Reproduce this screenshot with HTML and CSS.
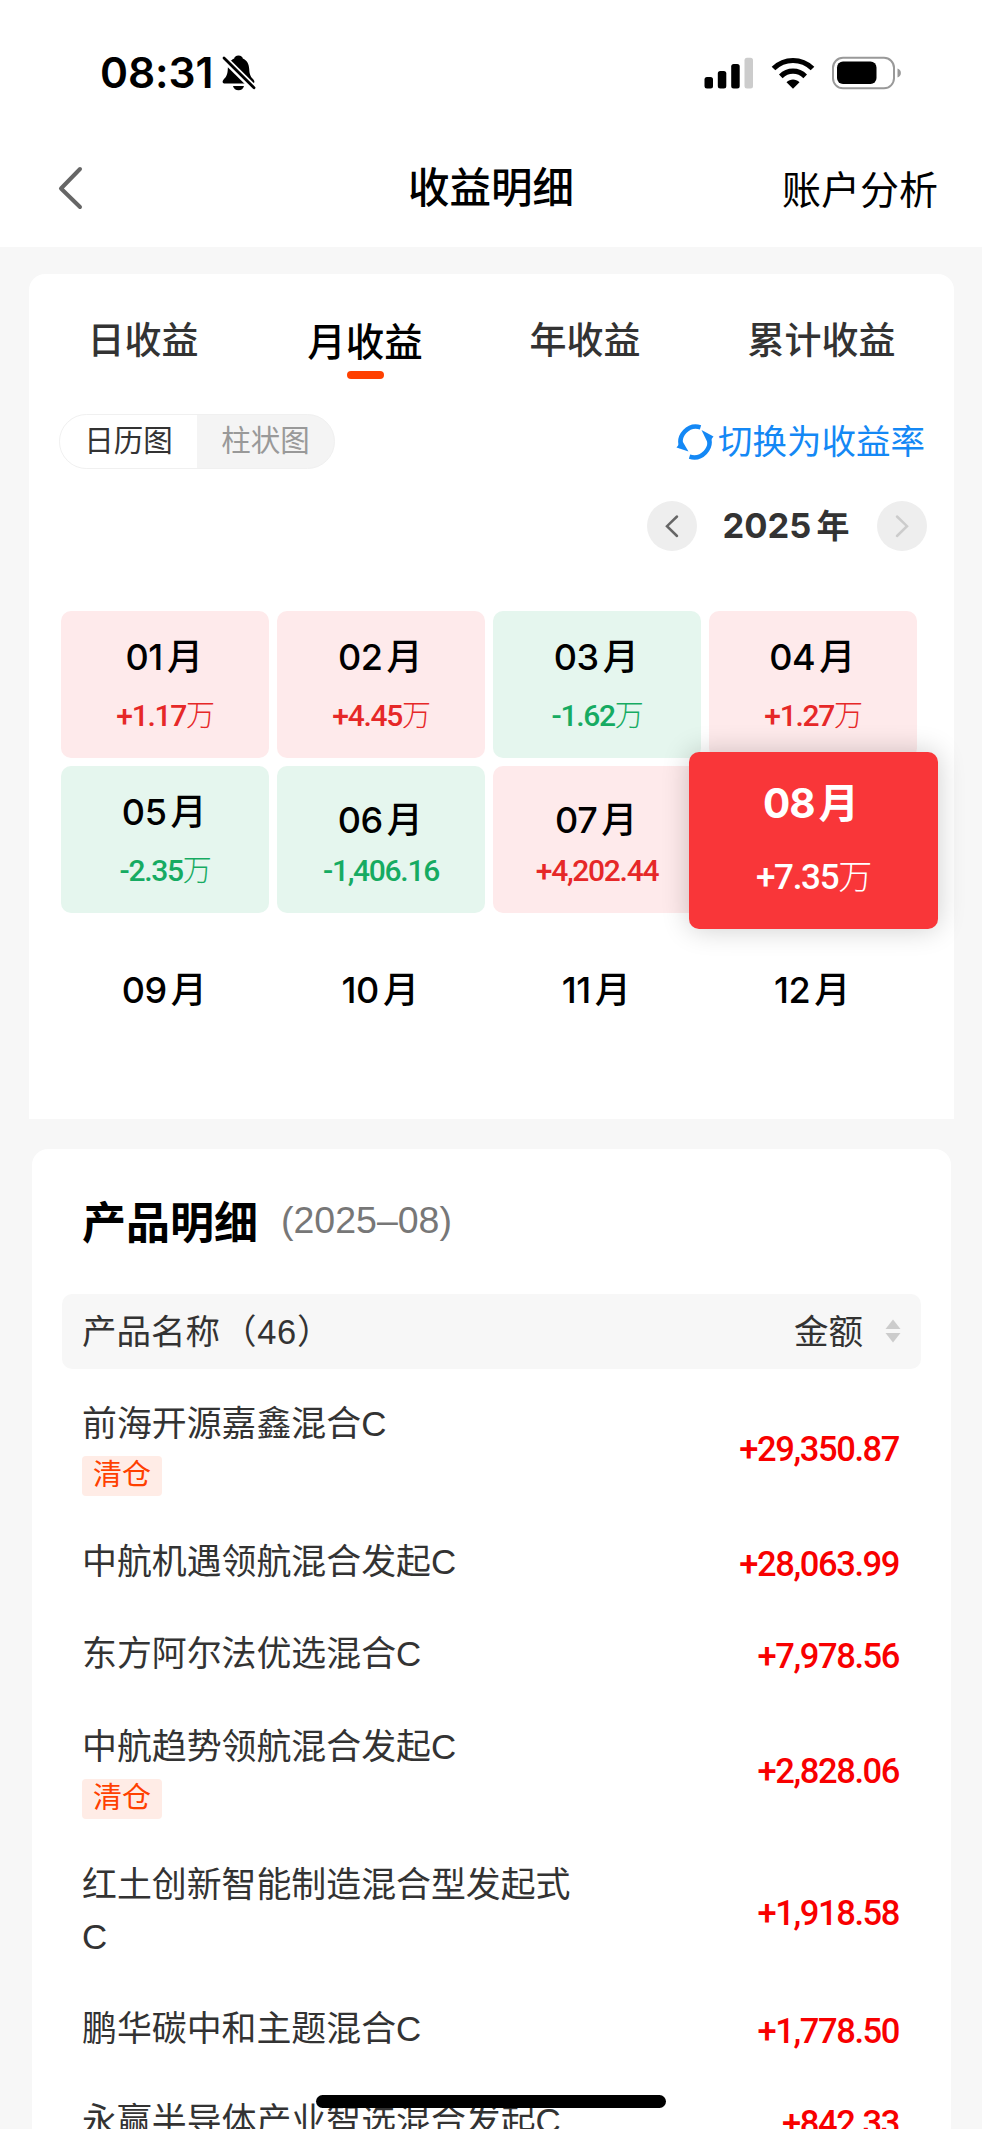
FILE: index.html
```html
<!DOCTYPE html>
<html lang="zh-CN">
<head>
  <meta charset="UTF-8">
  <title>收益明细</title>
  <link rel="stylesheet" href="styles.css">
</head>
<body>
  <!-- 状态栏 -->
  <div class="status-bar">
    <span class="time">08:31</span>
    <svg class="bell" width="34" height="36" viewBox="0 0 34 36">
      <path d="M16.500 0.500c-2.600 0-4 1.400-4.300 2.900C8 5 6 9 5.800 14c-.2 6-1.800 8-4.200 10.500C-.2 26.500.5 28.500 3 28.500h27c2.500 0 3.200-2 1.400-4C29 22 27.400 20 27.200 14 27 9 25 5 20.800 3.400 20.500 1.900 19.100.5 16.500.5z"/>
      <path d="M11 31h11c-.6 2.700-2.700 4.300-5.500 4.300S11.600 33.700 11 31z"/>
      <path d="M-1 0.500L33 34.200" stroke="#fff" stroke-width="7"/>
      <path d="M2 3L32 32.700" stroke="#000" stroke-width="2.800" stroke-linecap="round"/>
    </svg>
    <svg class="signal" width="50" height="32" viewBox="0 0 50 32">
      <rect x="0.500" y="20" width="8.500" height="11.500" rx="2.500"/>
      <rect x="13.800" y="14" width="8.500" height="17.500" rx="2.500"/>
      <rect x="27.200" y="7" width="8.500" height="24.500" rx="2.500"/>
      <rect x="40.500" y="0.700" width="8.500" height="30.800" rx="2.500" fill="#ccc"/>
    </svg>
    <svg class="wifi" width="44" height="32" viewBox="0 0 44 32">
      <g fill="none" stroke="#000" stroke-width="5.200">
        <path d="M2.500 11.500C13.500 0.800 30.500 0.800 41.500 11.500"/>
        <path d="M9.800 19.300C16.800 12.500 27.200 12.500 34.200 19.300"/>
      </g>
      <path d="M15.500 25.200C19.300 21.700 24.700 21.700 28.500 25.200L22 31.700z"/>
    </svg>
    <svg class="battery" width="70" height="34" viewBox="0 0 70 34">
      <rect x="1" y="1.800" width="61" height="30.500" rx="10" fill="none" stroke="#999" stroke-width="2"/>
      <rect x="5" y="5.500" width="39.500" height="22.500" rx="6"/>
      <path d="M65.500 12.500c4.500 1.500 4.500 7.500 0 9z" fill="#999"/>
    </svg>
  </div>

  <!-- 导航栏 -->
  <div class="nav-bar">
    <svg class="back" width="26" height="46" viewBox="0 0 26 46">
      <path d="M22 3L3 22.500L22 41" fill="none" stroke="#666" stroke-width="4" stroke-linecap="round" stroke-linejoin="round"/>
    </svg>
    <h1>收益明细</h1>
    <a class="nav-link">账户分析</a>
  </div>

  <!-- 收益日历 -->
  <div class="card calendar">
    <div class="tabs">
      <span class="tab tab-day">日收益</span>
      <span class="tab tab-month active">月收益</span>
      <span class="tab tab-year">年收益</span>
      <span class="tab tab-total">累计收益</span>
    </div>

    <div class="toolbar">
      <div class="segment">
        <span class="seg on">日历图</span>
        <span class="seg">柱状图</span>
      </div>
      <a class="switch">
        <svg width="38" height="38" viewBox="0 0 38 38">
          <g fill="none" stroke="#1488f5" stroke-width="4.500">
            <path d="M24.500 4.300A15.500 15.500 0 0 0 5.500 24.500"/>
            <path d="M13.500 33.700A15.500 15.500 0 0 0 32.500 13.500"/>
          </g>
          <path d="M0.500 24.500L6 17.500L12.500 28.500z" fill="#1488f5"/>
          <path d="M37.500 13.500L32 20.500L25.500 7z" fill="#1488f5"/>
        </svg>
        <span>切换为收益率</span>
      </a>
    </div>

    <div class="year-picker">
      <span class="circle">
        <svg width="50" height="50" viewBox="0 0 50 50"><path d="M30 15.500L20 25.200L30 35" fill="none" stroke="#666" stroke-width="2.500" stroke-linecap="round"/></svg>
      </span>
      <span class="year">2025<i>年</i></span>
      <span class="circle">
        <svg width="50" height="50" viewBox="0 0 50 50"><path d="M20 15.500L30 25.200L20 35" fill="none" stroke="#ccc" stroke-width="2.500" stroke-linecap="round"/></svg>
      </span>
    </div>

    <div class="months">
      <div class="month up"><b>01<i>月</i></b><span>+1.17<em>万</em></span></div>
      <div class="month up"><b>02<i>月</i></b><span>+4.45<em>万</em></span></div>
      <div class="month down"><b>03<i>月</i></b><span>-1.62<em>万</em></span></div>
      <div class="month up"><b>04<i>月</i></b><span>+1.27<em>万</em></span></div>
      <div class="month down"><b>05<i>月</i></b><span>-2.35<em>万</em></span></div>
      <div class="month down short"><b>06<i>月</i></b><span>-1,406.16</span></div>
      <div class="month up short"><b>07<i>月</i></b><span>+4,202.44</span></div>
      <div class="month selected"><b>08<i>月</i></b><span>+7.35<em>万</em></span></div>
      <div class="month empty"><b>09<i>月</i></b></div>
      <div class="month empty"><b>10<i>月</i></b></div>
      <div class="month empty"><b>11<i>月</i></b></div>
      <div class="month empty"><b>12<i>月</i></b></div>
    </div>
  </div>

  <!-- 产品明细 -->
  <div class="card products">
    <div class="products-title">
      <h2>产品明细</h2>
      <span>(2025–08)</span>
    </div>
    <div class="list-head">
      <span>产品名称<i>（46）</i></span>
      <span class="sort">金额
        <svg width="16" height="24" viewBox="0 0 16 24" fill="#ccc">
          <path d="M8 0.500L15.500 10H0.500z"/>
          <path d="M8 23.500L15.500 14H0.500z"/>
        </svg>
      </span>
    </div>
    <div class="list">
      <div class="row">
        <div class="name">前海开源嘉鑫混合C<span class="tag">清仓</span></div>
        <div class="amount">+29,350.87</div>
      </div>
      <div class="row">
        <div class="name">中航机遇领航混合发起C</div>
        <div class="amount">+28,063.99</div>
      </div>
      <div class="row">
        <div class="name">东方阿尔法优选混合C</div>
        <div class="amount">+7,978.56</div>
      </div>
      <div class="row">
        <div class="name">中航趋势领航混合发起C<span class="tag">清仓</span></div>
        <div class="amount">+2,828.06</div>
      </div>
      <div class="row">
        <div class="name">红土创新智能制造混合型发起式C</div>
        <div class="amount">+1,918.58</div>
      </div>
      <div class="row">
        <div class="name">鹏华碳中和主题混合C</div>
        <div class="amount">+1,778.50</div>
      </div>
      <div class="row">
        <div class="name">永赢半导体产业智选混合发起C</div>
        <div class="amount">+842.33</div>
      </div>
    </div>
  </div>

  <div class="home-indicator"></div>
</body>
</html>
```
FILE: styles.css
```css
* {
  box-sizing: border-box;
}

body {
  margin: 0;
  width: 982px;
  height: 2129px;
  overflow: hidden;
  position: relative;
  background: #f7f7f7;
  color: #333;
  font-family: "Liberation Sans", "Noto Sans CJK SC", sans-serif;
}

i, em {
  font-style: normal;
}

svg {
  display: block;
}

/* 状态栏 */
.status-bar {
  display: flex;
  align-items: center;
  height: 130px;
  padding: 16px 80px 0 100px;
  background: #fff;
}

.time {
  width: 122px;
  font: 600 42.5px/50px Inter, sans-serif;
  letter-spacing: -0.1px;
  color: #000;
}

.signal {
  margin-left: auto;
}

.wifi {
  margin-left: 17px;
}

.battery {
  margin-left: 17px;
}

/* 导航栏 */
.nav-bar {
  display: grid;
  grid-template-columns: 1fr auto 1fr;
  align-items: center;
  height: 117px;
  padding: 0 44px 0 58px;
  background: #fff;
  color: #000;
}

.nav-bar h1 {
  margin: 0;
  padding: 0 14px 7px 0;
  font-size: 41.5px;
  font-weight: 500;
}

.nav-link {
  justify-self: end;
  padding-bottom: 4px;
  font-size: 39px;
}

.card {
  background: #fff;
  border-radius: 16px 16px 0 0;
}

/* 收益日历 */
.calendar {
  width: 925px;
  height: 845px;
  margin: 27px 0 0 29px;
  padding-top: 36px;
}

.tabs {
  display: grid;
  grid-template-columns: 228px 216px 224px 249px;
  height: 70px;
}

.tab {
  text-align: center;
  font-size: 37px;
  font-weight: 500;
  line-height: 64px;
}

.tab.active {
  color: #000;
  font-size: 38.5px;
  line-height: 65px;
}

.tab.active::after {
  content: "";
  display: block;
  width: 37px;
  height: 8px;
  margin: -4px auto 0;
  border-radius: 4px;
  background: #ff4000;
}

.toolbar {
  display: flex;
  justify-content: space-between;
  align-items: center;
  height: 55px;
  margin-top: 34px;
  padding: 0 29px 0 30px;
}

.segment {
  display: flex;
  width: 276px;
  height: 55px;
  border: 1px solid #f0f0f0;
  border-radius: 28px;
  overflow: hidden;
  background: #f4f4f4;
}

.seg {
  flex: 1;
  text-align: center;
  font-size: 29.5px;
  line-height: 52px;
  color: #999;
}

.seg.on {
  background: #fff;
  color: #333;
}

.switch {
  display: flex;
  align-items: center;
  gap: 4px;
  font-size: 34.5px;
  color: #1488f5;
}

.switch span {
  padding-bottom: 5px;
}

.year-picker {
  display: flex;
  justify-content: space-between;
  align-items: center;
  width: 280px;
  height: 50px;
  margin: 32px 27px 0 auto;
}

.circle {
  width: 50px;
  height: 50px;
  border-radius: 50%;
  background: #eee;
}

.year {
  padding-right: 2px;
  font: 700 34.5px/50px Inter, "Noto Sans CJK SC", sans-serif;
}

.year i {
  margin-left: 5px;
  font-size: 33px;
}

.months {
  display: grid;
  grid-template-columns: repeat(4, 208px);
  grid-auto-rows: 147px;
  gap: 8px;
  margin: 60px 0 0 32px;
}

.month {
  display: flex;
  flex-direction: column;
  align-items: center;
  padding-top: 21px;
  border-radius: 10px;
}

.month b {
  padding-right: 2px;
  font: 500 36px/50px Inter, "Noto Sans CJK SC", sans-serif;
  letter-spacing: -0.4px;
  color: #000;
}

.month b i {
  margin-left: 4px;
}

.month span {
  margin-top: 16px;
  font: 500 30px/36px Roboto, "Noto Sans CJK SC", sans-serif;
  letter-spacing: -1.3px;
}

.month em {
  font-size: 29px;
  font-weight: 300;
}

.month.up {
  background: #feeaeb;
  color: #e62828;
}

.month.down {
  background: #e5f6ee;
  color: #16ab62;
}

.month.short {
  padding-top: 29px;
}

.month.short span {
  margin-top: 8px;
}

.month.empty {
  padding-top: 44px;
}

/* 选中月份放大显示 */
.month.selected {
  z-index: 1;
  width: 249px;
  height: 177px;
  margin: -14px 0 0 -20px;
  padding-top: 27px;
  background: #f93639;
  color: #fff;
  box-shadow: 0 0 28px rgba(0, 0, 0, 0.2);
}

.month.selected b {
  padding-right: 6px;
  font-size: 40.5px;
  font-weight: 700;
  letter-spacing: -1px;
  color: #fff;
}

.month.selected span {
  margin-top: 30px;
  font-size: 35px;
}

.month.selected em {
  font-size: 34px;
}

/* 产品明细 */
.products {
  width: 919px;
  margin: 30px 0 0 32px;
  padding: 37px 30px 0;
}

.products-title {
  display: flex;
  align-items: center;
  height: 68px;
  padding-left: 20px;
}

.products-title h2 {
  margin: 0;
  font-size: 44px;
  font-weight: 700;
  color: #000;
}

.products-title span {
  margin-left: 23px;
  font-size: 37.5px;
  color: #777;
}

.list-head {
  display: flex;
  justify-content: space-between;
  align-items: center;
  height: 75px;
  margin-top: 40px;
  padding: 0 20px 5px;
  border-radius: 10px;
  background: #f7f7f7;
  font-size: 34.5px;
}

.list-head i {
  margin-left: 2px;
  letter-spacing: 0.7px;
}

.sort {
  display: flex;
  align-items: center;
  gap: 22px;
}

.sort svg {
  margin-top: 4px;
}

.list {
  padding-top: 9px;
}

.row {
  display: flex;
  justify-content: space-between;
  align-items: center;
  padding: 20px 22px 20px 20px;
}

.name {
  width: 500px;
  font-size: 34.9px;
  line-height: 52.2px;
  word-break: break-all;
}

.tag {
  display: block;
  width: 80px;
  height: 40px;
  margin-top: 6px;
  border-radius: 4px;
  background: #ffece6;
  color: #ff4000;
  font-size: 29px;
  line-height: 39px;
  text-align: center;
}

.amount {
  padding-top: 3px;
  font: 500 34.5px/40px Roboto, sans-serif;
  letter-spacing: -1.4px;
  color: #f80000;
}

.home-indicator {
  position: absolute;
  left: 316px;
  top: 2095px;
  width: 350px;
  height: 13px;
  border-radius: 7px;
  background: #000;
}
```
